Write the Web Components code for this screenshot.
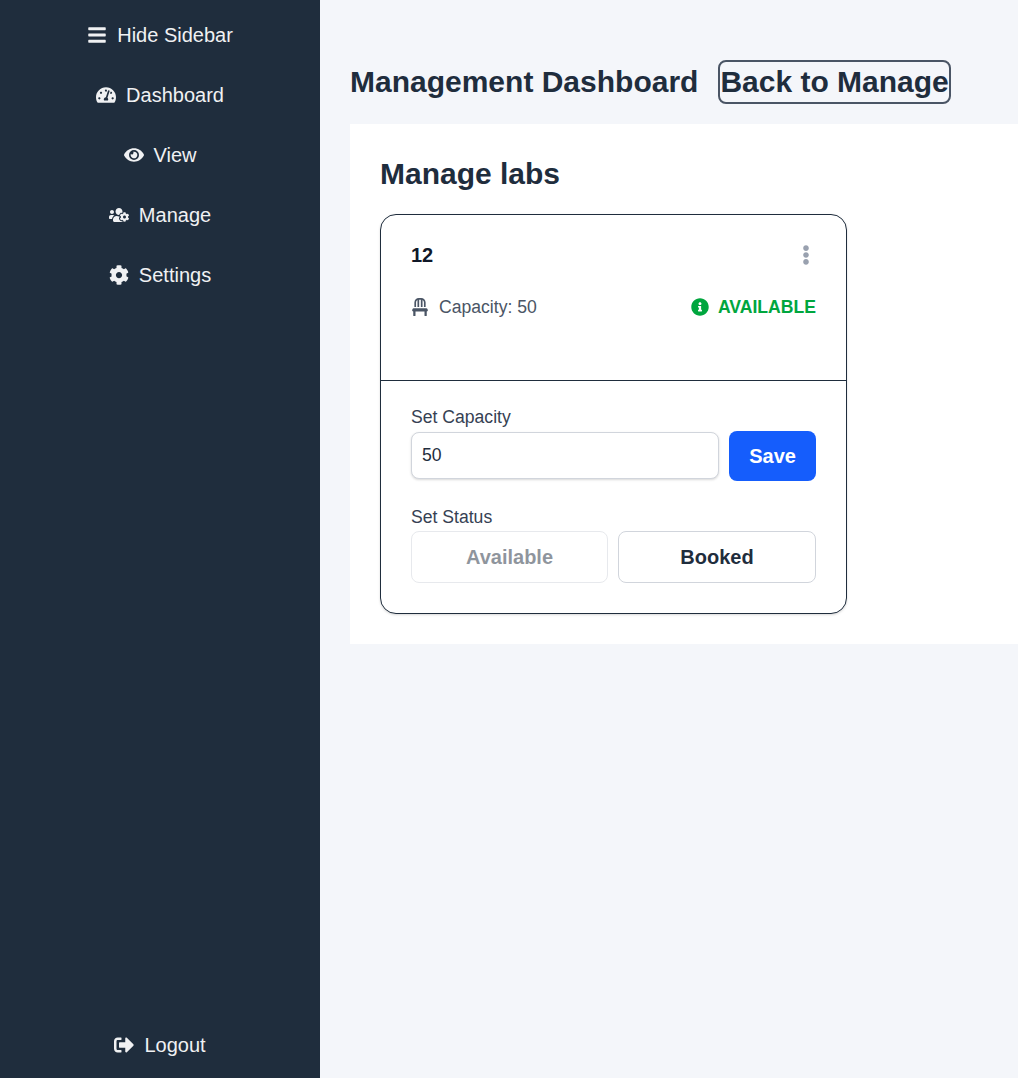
<!DOCTYPE html>
<html lang="en">
<head>
<meta charset="utf-8">
<title>Management Dashboard</title>
<style>
    html, body{
        margin: 0;
        height: 100%;
    }
    body{
        font-family: "Liberation Sans", Arial, sans-serif;
        background-color: #f4f6fa;
        color: #1f2d3d;
    }
</style>
</head>
<body>
<app-shell>
    <side-bar slot="side">
        <nav-item icon="bars">Hide Sidebar</nav-item>
        <nav-item icon="gauge">Dashboard</nav-item>
        <nav-item icon="eye">View</nav-item>
        <nav-item icon="userscog">Manage</nav-item>
        <nav-item icon="cog">Settings</nav-item>
        <nav-item icon="logout" slot="bottom">Logout</nav-item>
    </side-bar>
    <page-header title="Management Dashboard" action="Back to Manage"></page-header>
    <manage-panel title="Manage labs">
        <lab-card name="12" capacity="50" status="AVAILABLE"></lab-card>
    </manage-panel>
</app-shell>

<script>
    const ICONS = {
        bars: ['448 512', 'M16 132h416c8.837 0 16-7.163 16-16V76c0-8.837-7.163-16-16-16H16C7.163 60 0 67.163 0 76v40c0 8.837 7.163 16 16 16zm0 160h416c8.837 0 16-7.163 16-16v-40c0-8.837-7.163-16-16-16H16c-8.837 0-16 7.163-16 16v40c0 8.837 7.163 16 16 16zm0 160h416c8.837 0 16-7.163 16-16v-40c0-8.837-7.163-16-16-16H16c-8.837 0-16 7.163-16 16v40c0 8.837 7.163 16 16 16z'],
        gauge: ['576 512', 'M288 32C128.94 32 0 160.94 0 320c0 52.8 14.25 102.26 39.06 144.8 5.61 9.62 16.3 15.2 27.44 15.2h443c11.14 0 21.83-5.58 27.44-15.2C561.75 422.26 576 372.8 576 320c0-159.06-128.94-288-288-288zm0 64c14.71 0 26.58 10.13 30.32 23.65-1.11 2.26-2.64 4.23-3.45 6.67l-9.22 27.67c-5.13 3.49-10.97 6.01-17.64 6.01-17.67 0-32-14.33-32-32S270.33 96 288 96zM96 384c-17.67 0-32-14.33-32-32s14.33-32 32-32 32 14.33 32 32-14.33 32-32 32zm48-160c-17.67 0-32-14.33-32-32s14.33-32 32-32 32 14.33 32 32-14.33 32-32 32zm246.77-72.41l-61.33 184C343.13 347.33 352 364.54 352 384c0 11.72-3.38 22.55-8.88 32H232.88c-5.5-9.45-8.88-20.28-8.88-32 0-33.94 26.5-61.43 59.9-63.59l61.34-184.01c4.17-12.56 17.73-19.45 30.36-15.17 12.57 4.19 19.35 17.79 15.17 30.36zm14.66 57.2l15.52-46.55c3.47-1.29 7.13-2.23 11.05-2.23 17.67 0 32 14.33 32 32s-14.33 32-32 32c-11.38-.01-20.89-6.28-26.57-15.22zM480 384c-17.67 0-32-14.33-32-32s14.33-32 32-32 32 14.33 32 32-14.33 32-32 32z'],
        eye: ['576 512', 'M572.52 241.4C518.29 135.59 410.93 64 288 64S57.68 135.64 3.48 241.41a32.35 32.35 0 0 0 0 29.19C57.71 376.41 165.07 448 288 448s230.32-71.64 284.52-177.41a32.35 32.35 0 0 0 0-29.19zM288 400a144 144 0 1 1 144-144 143.93 143.93 0 0 1-144 144zm0-240a95.31 95.31 0 0 0-25.31 3.79 47.85 47.85 0 0 1-66.9 66.9A95.78 95.78 0 1 0 288 160z'],
        userscog: ['640 512', 'M610.5 341.3c2.6-14.1 2.6-28.5 0-42.6l25.8-14.9c3-1.7 4.3-5.2 3.3-8.5-6.7-21.6-18.2-41.2-33.2-57.4-2.3-2.5-6-3.1-9-1.4l-25.8 14.9c-10.9-9.3-23.4-16.5-36.9-21.3v-29.8c0-3.4-2.4-6.4-5.7-7.1-22.3-5-45-4.8-66.2 0-3.3.7-5.7 3.7-5.7 7.1v29.8c-13.5 4.8-26 12-36.9 21.3l-25.8-14.9c-2.9-1.7-6.7-1.1-9 1.4-15 16.2-26.5 35.8-33.2 57.4-1 3.3.4 6.8 3.3 8.5l25.8 14.9c-2.6 14.1-2.6 28.5 0 42.6l-25.8 14.9c-3 1.7-4.3 5.2-3.3 8.5 6.7 21.6 18.2 41.1 33.2 57.4 2.3 2.5 6 3.1 9 1.4l25.8-14.9c10.9 9.3 23.4 16.5 36.9 21.3v29.8c0 3.4 2.4 6.4 5.7 7.1 22.3 5 45 4.8 66.2 0 3.3-.7 5.7-3.7 5.7-7.1v-29.8c13.5-4.8 26-12 36.9-21.3l25.8 14.9c2.9 1.7 6.7 1.1 9-1.4 15-16.2 26.5-35.8 33.2-57.4 1-3.3-.4-6.8-3.3-8.5l-25.8-14.9zM496 368.5c-26.8 0-48.5-21.8-48.5-48.5s21.8-48.5 48.5-48.5 48.5 21.8 48.5 48.5-21.7 48.5-48.5 48.5zM96 224c35.3 0 64-28.7 64-64s-28.7-64-64-64-64 28.7-64 64 28.7 64 64 64zm224 32c1.9 0 3.7-.5 5.6-.6 8.3-21.7 20.5-42.1 36.3-59.2 7.4-8 17.9-12.6 28.9-12.6 6.9 0 13.7 1.8 19.6 5.3l7.9 4.6c.8-.5 1.6-.9 2.4-1.4 7-14.6 11.2-30.8 11.2-48 0-61.9-50.1-112-112-112S208 82.1 208 144c0 61.9 50.1 112 112 112zm105.2 194.5c-2.3-1.2-4.6-2.6-6.8-3.9-8.2 4.8-15.3 9.8-27.5 9.8-10.9 0-21.4-4.6-28.9-12.6-18.3-19.8-32.3-43.9-40.2-69.6-10.7-34.5 24.9-49.7 25.8-50.3-.1-2.6-.1-5.2 0-7.8l-7.9-4.6c-3.8-2.2-7-5-9.8-8.1-3.3.2-6.5.6-9.8.6-24.6 0-47.6-6-68.5-16h-8.3C179.6 288 128 339.6 128 403.2V432c0 26.5 21.5 48 48 48h255.4c-3.7-6-6.2-12.8-6.2-20.3v-9.2zM173.1 274.6C161.5 263.1 145.6 256 128 256H64c-35.3 0-64 28.7-64 64v32c0 17.7 14.3 32 32 32h65.9c6.3-47.4 34.9-87.3 75.2-109.4z'],
        cog: ['512 512', 'M487.4 315.7l-42.6-24.6c4.3-23.2 4.3-47 0-70.2l42.6-24.6c4.9-2.8 7.1-8.6 5.5-14-11.1-35.6-30-67.8-54.7-94.6-3.8-4.1-10-5.1-14.8-2.3L380.8 110c-17.9-15.4-38.5-27.3-60.8-35.1V25.8c0-5.6-3.9-10.5-9.4-11.7-36.7-8.2-74.3-7.8-109.2 0-5.5 1.2-9.4 6.1-9.4 11.7V75c-22.2 7.9-42.8 19.8-60.8 35.1L88.7 85.5c-4.9-2.8-11-1.9-14.8 2.3-24.7 26.7-43.6 58.9-54.7 94.6-1.7 5.4.6 11.2 5.5 14L67.3 221c-4.3 23.2-4.3 47 0 70.2l-42.6 24.6c-4.9 2.8-7.1 8.6-5.5 14 11.1 35.6 30 67.8 54.7 94.6 3.8 4.1 10 5.1 14.8 2.3l42.6-24.6c17.9 15.4 38.5 27.3 60.8 35.1v49.2c0 5.6 3.9 10.5 9.4 11.7 36.7 8.2 74.3 7.8 109.2 0 5.5-1.2 9.4-6.1 9.4-11.7v-49.2c22.2-7.9 42.8-19.8 60.8-35.1l42.6 24.6c4.9 2.8 11 1.9 14.8-2.3 24.7-26.7 43.6-58.9 54.7-94.6 1.5-5.5-.7-11.3-5.6-14.1zM256 336c-44.1 0-80-35.9-80-80s35.9-80 80-80 80 35.9 80 80-35.9 80-80 80z'],
        logout: ['512 512', 'M497 273L329 441c-15 15-41 4.5-41-17v-96H152c-13.3 0-24-10.7-24-24v-96c0-13.3 10.7-24 24-24h136V88c0-21.4 25.9-32 41-17l168 168c9.3 9.4 9.3 24.6 0 34zM192 436v-40c0-6.6-5.4-12-12-12H96c-17.7 0-32-14.3-32-32V160c0-17.7 14.3-32 32-32h84c6.6 0 12-5.4 12-12V76c0-6.6-5.4-12-12-12H96c-53 0-96 43-96 96v192c0 53 43 96 96 96h84c6.6 0 12-5.4 12-12z'],
        chair: ['448 512', 'M112 128c0-29.5 16.2-55 40-68.9V256h48V48h48v208h48V59.1c23.8 13.9 40 39.4 40 68.9v128h48V128C384 57.3 326.7 0 256 0h-64C121.3 0 64 57.3 64 128v128h48zm334.3 213.9l-10.7-32c-4.4-13.1-16.6-21.9-30.4-21.9H42.7c-13.8 0-26 8.8-30.4 21.9l-10.7 32C-5.2 362.6 10.2 384 32 384v112c0 8.8 7.2 16 16 16h32c8.8 0 16-7.2 16-16V384h256v112c0 8.8 7.2 16 16 16h32c8.8 0 16-7.2 16-16V384c21.8 0 37.2-21.4 30.3-42.1z'],
        info: ['512 512', 'M256 8C119.043 8 8 119.083 8 256c0 136.997 111.043 248 248 248s248-111.003 248-248C504 119.083 392.957 8 256 8zm0 110c23.196 0 42 18.804 42 42s-18.804 42-42 42-42-18.804-42-42 18.804-42 42-42zm56 254c0 6.627-5.373 12-12 12h-88c-6.627 0-12-5.373-12-12v-24c0-6.627 5.373-12 12-12h12v-64h-12c-6.627 0-12-5.373-12-12v-24c0-6.627 5.373-12 12-12h64c6.627 0 12 5.373 12 12v100h12c6.627 0 12 5.373 12 12v24z'],
        dots: ['192 512', 'M96 184c39.8 0 72 32.2 72 72s-32.2 72-72 72-72-32.2-72-72 32.2-72 72-72zM24 80c0 39.8 32.2 72 72 72s72-32.2 72-72S135.8 8 96 8 24 40.2 24 80zm0 352c0 39.8 32.2 72 72 72s72-32.2 72-72-32.2-72-72-72-72 32.2-72 72z']
    };

    // icono dentro de una caja cuadrada, como 1em x 1em
    class appIcon extends HTMLElement{
        constructor(){
            super();
            this.attachShadow({mode: "open"});
        }

        connectedCallback(){
            const [box, d] = ICONS[this.getAttribute('name')];
            this.shadowRoot.innerHTML = `
                <style>
                    :host{
                        display: block;
                        flex: none;
                        width: var(--icon-size, 20px);
                        height: var(--icon-size, 20px);
                    }
                    svg{
                        display: block;
                        width: 100%;
                        height: 100%;
                        fill: currentColor;
                    }
                </style>
                <svg viewBox="0 0 ${box}" aria-hidden="true"><path d="${d}"></path></svg>
            `;
        }
    }
    customElements.define("app-icon", appIcon);

    class appShell extends HTMLElement{
        constructor(){
            super();
            this.attachShadow({mode: "open"});
            this.shadowRoot.innerHTML = `
                <style>
                    :host{
                        display: flex;
                        height: 1078px;
                    }
                    main{
                        flex: 1;
                        min-width: 0;
                        padding: 60px 0 0 30px;
                    }
                </style>
                <slot name="side"></slot>
                <main><slot></slot></main>
            `;
        }
    }
    customElements.define("app-shell", appShell);

    class sideBar extends HTMLElement{
        constructor(){
            super();
            this.attachShadow({mode: "open"});
            this.shadowRoot.innerHTML = `
                <style>
                    :host{
                        display: flex;
                        flex-direction: column;
                        justify-content: space-between;
                        flex: none;
                        width: 320px;
                        padding: 5px 0 3px;
                        box-sizing: border-box;
                        background-color: #1f2d3d;
                        color: #f0f1f3;
                    }
                    div{
                        display: flex;
                        flex-direction: column;
                    }
                </style>
                <div><slot></slot></div>
                <div><slot name="bottom"></slot></div>
            `;
        }
    }
    customElements.define("side-bar", sideBar);

    class navItem extends HTMLElement{
        constructor(){
            super();
            this.attachShadow({mode: "open"});
        }

        connectedCallback(){
            this.shadowRoot.innerHTML = `
                <style>
                    :host{
                        display: flex;
                        justify-content: center;
                        align-items: center;
                        gap: 10px;
                        height: 60px;
                        font-size: 20px;
                        cursor: pointer;
                    }
                </style>
                <app-icon name="${this.getAttribute('icon')}"></app-icon>
                <span><slot></slot></span>
            `;
        }
    }
    customElements.define("nav-item", navItem);

    class pageHeader extends HTMLElement{
        constructor(){
            super();
            this.attachShadow({mode: "open"});
        }

        connectedCallback(){
            this.shadowRoot.innerHTML = `
                <style>
                    :host{
                        display: flex;
                        align-items: center;
                        gap: 20px;
                        margin-bottom: 20px;
                    }
                    h1{
                        margin: 0;
                        font-size: 30px;
                        line-height: 36px;
                        font-weight: 700;
                    }
                    button{
                        font: 700 30px/36px "Liberation Sans", Arial, sans-serif;
                        color: inherit;
                        background: none;
                        border: 2px solid #4a5565;
                        border-radius: 8px;
                        padding: 2px 0;
                    }
                </style>
                <h1>${this.getAttribute('title')}</h1>
                <button type="button">${this.getAttribute('action')}</button>
            `;
        }
    }
    customElements.define("page-header", pageHeader);

    class managePanel extends HTMLElement{
        constructor(){
            super();
            this.attachShadow({mode: "open"});
        }

        connectedCallback(){
            this.shadowRoot.innerHTML = `
                <style>
                    :host{
                        display: block;
                        padding: 32px 30px 30px;
                        background-color: #fff;
                    }
                    h2{
                        margin: 0 0 22px;
                        font-size: 30px;
                        line-height: 36px;
                        font-weight: 700;
                    }
                </style>
                <h2>${this.getAttribute('title')}</h2>
                <slot></slot>
            `;
        }
    }
    customElements.define("manage-panel", managePanel);

    class labCard extends HTMLElement{
        constructor(){
            super();
            this.attachShadow({mode: "open"});
        }

        connectedCallback(){
            const name = this.getAttribute('name');
            const capacity = this.getAttribute('capacity');
            const status = this.getAttribute('status');
            this.shadowRoot.innerHTML = `
                <style>
                    :host{
                        display: block;
                        width: 467px;
                        box-sizing: border-box;
                        border: 1px solid #1f2d3d;
                        border-radius: 16px;
                        background-color: #fff;
                        box-shadow: 0 1px 3px rgba(0,0,0,0.1), 0 1px 2px rgba(0,0,0,0.06);
                    }
                    .top{
                        height: 166px;
                        box-sizing: border-box;
                        padding: 30px 30px 0;
                        border-bottom: 1px solid #1f2d3d;
                    }
                    .row{
                        display: flex;
                        justify-content: space-between;
                        align-items: center;
                    }
                    .name{
                        font-size: 20px;
                        line-height: 20px;
                        font-weight: 700;
                        color: #101828;
                    }
                    .dots{
                        color: #99a1af;
                    }
                    .info{
                        margin-top: 32px;
                        font-size: 17.6px;
                        line-height: 20px;
                        --icon-size: 18px;
                    }
                    .capacity, .status{
                        display: flex;
                        align-items: center;
                        gap: 10px;
                    }
                    .capacity{
                        color: #4a5565;
                    }
                    .status{
                        gap: 9px;
                        color: #00a63e;
                        font-weight: 700;
                    }
                    .bottom{
                        padding: 24px 30px 30px;
                    }
                    label{
                        display: block;
                        margin-bottom: 1px;
                        font-size: 17.6px;
                        line-height: 25px;
                        color: #364153;
                    }
                    .edit{
                        display: flex;
                        align-items: flex-start;
                        gap: 10px;
                        height: 50px;
                        margin-bottom: 24px;
                    }
                    input{
                        flex: 1;
                        min-width: 0;
                        height: 47px;
                        margin-top: 1px;
                        box-sizing: border-box;
                        padding: 0 10px;
                        font: 17.6px "Liberation Sans", Arial, sans-serif;
                        color: #1f2d3d;
                        border: 1px solid #d1d5dc;
                        border-radius: 8px;
                        box-shadow: 0 1px 3px rgba(0,0,0,0.1), 0 1px 2px rgba(0,0,0,0.06);
                        outline: none;
                    }
                    button{
                        font: 700 20px "Liberation Sans", Arial, sans-serif;
                        border-radius: 8px;
                        cursor: pointer;
                    }
                    .save{
                        height: 50px;
                        padding: 0 20px;
                        border: none;
                        background-color: #155dfc;
                        color: #fff;
                    }
                    .status-btns{
                        display: grid;
                        grid-template-columns: 197px 198px;
                        gap: 10px;
                    }
                    .status-btns button{
                        height: 52px;
                        padding: 0;
                        background-color: #fff;
                        color: #1f2d3d;
                        border: 1px solid #d1d5dc;
                    }
                    .status-btns button:disabled{
                        opacity: 0.5;
                        cursor: default;
                    }
                </style>
                <div class="top">
                    <div class="row">
                        <span class="name">${name}</span>
                        <app-icon class="dots" name="dots"></app-icon>
                    </div>
                    <div class="row info">
                        <span class="capacity"><app-icon name="chair"></app-icon>Capacity: ${capacity}</span>
                        <span class="status"><app-icon name="info"></app-icon>${status}</span>
                    </div>
                </div>
                <div class="bottom">
                    <label for="cap">Set Capacity</label>
                    <div class="edit">
                        <input id="cap" type="text" value="${capacity}">
                        <button class="save" type="button">Save</button>
                    </div>
                    <label>Set Status</label>
                    <div class="status-btns">
                        <button type="button" disabled>Available</button>
                        <button type="button">Booked</button>
                    </div>
                </div>
            `;
        }
    }
    customElements.define("lab-card", labCard);
</script>
</body>
</html>
